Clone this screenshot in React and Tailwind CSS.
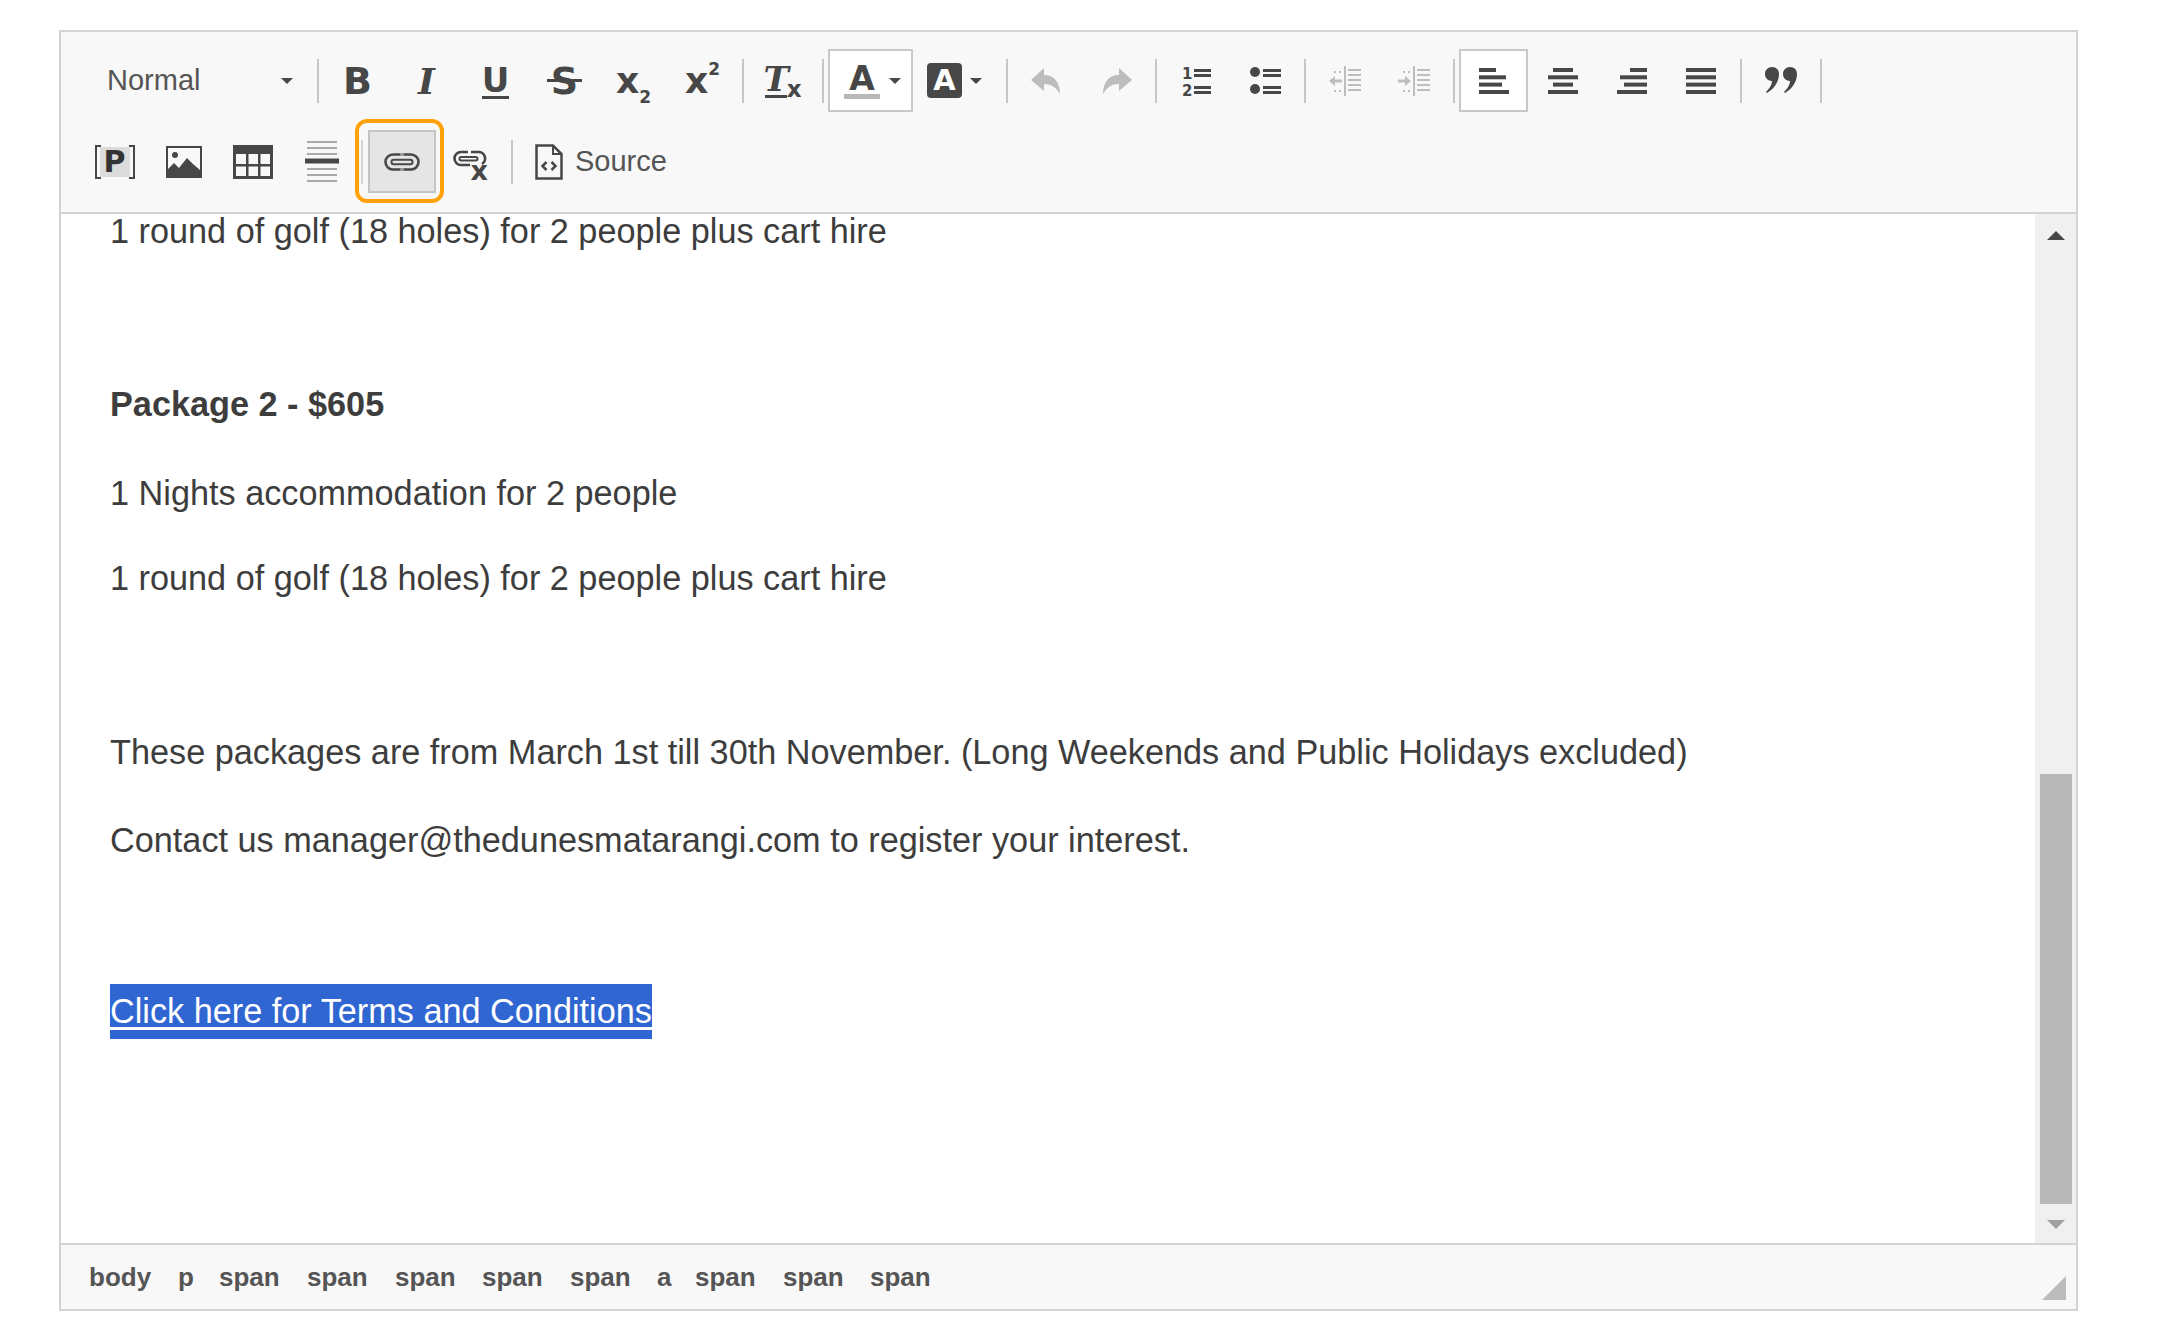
const D = "#474747";
const L = "#bdbdbd";

function Sep() {
  return <div className="w-[2px] h-[44px] ml-[5px] mr-[4px] bg-[#c6c6c6] shrink-0" />;
}
function Btn({ children, className = "" }) {
  return <div className={"w-[69px] h-[63px] flex items-center justify-center shrink-0 " + className}>{children}</div>;
}
function Caret({ className = "" }) {
  return <div className={"w-0 h-0 border-l-[6px] border-r-[6px] border-t-[6px] border-l-transparent border-r-transparent border-t-[#474747] " + className} />;
}
function Ic({ children, w = 36, h = 36, vb = "0 0 36 36" }) {
  return <svg width={w} height={h} viewBox={vb} fill="none">{children}</svg>;
}
const glyph = "font-['DejaVu_Sans',sans-serif] text-[#474747] font-bold leading-none";

function Lines({ x, ys, w, c = D, t = 3 }) {
  return ys.map((y, i) => <rect key={i} x={x} y={y} width={w} height={t} fill={c} />);
}
function Align({ kind }) {
  const ys = [5, 12.3, 19.6, 27];
  const ws = kind === "just" ? [30, 30, 30, 30] : kind === "center" ? [20, 30, 20, 30] : [17, 27, 23, 30];
  return (
    <Ic>
      {ys.map((y, i) => {
        const w = ws[i];
        const x = kind === "left" ? 3 : kind === "right" ? 33 - w : 18 - w / 2;
        return <rect key={i} x={x} y={y} width={w} height={4} fill={D} />;
      })}
    </Ic>
  );
}
function Indent({ out }) {
  return (
    <Ic>
      <rect x="17" y="3" width="2" height="30" fill={L} />
      <Lines x={21} ys={[6, 11, 16, 21, 26]} w={13} c={L} t={2} />
      {[8, 27].map((y) => <rect key={y} x="7" y={y} width="2" height="2" fill={L} />)}
      {[8, 27].map((y) => <rect key={y + 1} x="12" y={y} width="2" height="2" fill={L} />)}
      <path d={out ? "M2 18 L8 13 V16.5 H15 V19.5 H8 V23 Z" : "M15 18 L9 13 V16.5 H2 V19.5 H9 V23 Z"} fill={L} />
    </Ic>
  );
}
function LinkIcon() {
  return (
    <Ic w={36} h={18} vb="0 0 36 18">
      <path d="M16 1.5 H9 a7.5 7.5 0 0 0 0 15 H16" stroke={D} strokeWidth="2.6" />
      <path d="M20 1.5 H27 a7.5 7.5 0 0 1 0 15 H20" stroke={D} strokeWidth="2.6" />
      <rect x="7.5" y="6.8" width="21" height="4.4" rx="2.2" stroke={D} strokeWidth="2" />
      <rect x="16" y="0" width="4" height="3" fill={D} opacity="0.5" />
      <rect x="16" y="15" width="4" height="3" fill={D} opacity="0.5" />
    </Ic>
  );
}
function Comma({ x }) {
  return (
    <path
      transform={`translate(${x} 0)`}
      d="M8 4 C12.5 4 15 7 15 11 C15 18 11 25 3 30 L2 29 C6 25 8 21 8 18 C4 18 1 15 1 11 C1 7 4 4 8 4 Z"
      fill={D}
    />
  );
}

function Row1() {
  return (
    <div className="flex items-center h-[63px] relative">
      <div className="w-[251px] pl-[46px] pr-[19px] h-[63px] flex items-center justify-between shrink-0">
        <span className="text-[29px] text-[#555] leading-none">Normal</span>
        <Caret />
      </div>
      <Sep />
      <Btn><span className={glyph + " text-[38px]"}>B</span></Btn>
      <Btn><span className={"font-['DejaVu_Serif',serif] italic font-bold text-[#474747] text-[36px] leading-none"}>I</span></Btn>
      <Btn>
        <div className="flex flex-col items-center">
          <span className={glyph + " text-[34px] -mb-[1px]"}>U</span>
          <div className="w-[27px] h-[3px] bg-[#474747]" />
        </div>
      </Btn>
      <Btn><span className="relative flex items-center justify-center"><span className={glyph + " text-[38px]"}>S</span><span className="absolute -left-[4px] -right-[4px] top-[17px] h-[3px] bg-[#474747]" /></span></Btn>
      <Btn><span className={glyph + " text-[36px]"}>x<sub className="text-[17px] align-[-6px]">2</sub></span></Btn>
      <Btn><span className={glyph + " text-[36px]"}>x<sup className="text-[17px] align-[9px]">2</sup></span></Btn>
      <Sep />
      <Btn>
        <div className="flex flex-col items-center -mt-[2px]">
          <span className="font-['DejaVu_Serif',serif] italic font-bold text-[#474747] text-[34px] leading-none">T</span>
          <div className="w-[22px] h-[3px] bg-[#474747] -mt-[1px]" />
        </div>
        <span className={glyph + " text-[23px] mt-[18px] -ml-[2px]"}>x</span>
      </Btn>
      <Sep />
      <div className="w-[85px] h-[63px] border-2 border-[#c8c8c8] bg-white flex items-center pl-[14px] gap-[9px] shrink-0">
        <div className="flex flex-col items-center w-[36px]">
          <span className={glyph + " text-[33px] -mb-[1px]"}>A</span>
          <div className="w-[36px] h-[5px] bg-[#b8b8b8]" />
        </div>
        <Caret />
      </div>
      <div className="w-[88px] h-[63px] flex items-center pl-[14px] gap-[8px] shrink-0">
        <div className="w-[35px] h-[35px] rounded-[4px] bg-[#474747] flex items-center justify-center">
          <span className="font-['DejaVu_Sans',sans-serif] font-bold text-white text-[29px] leading-none">A</span>
        </div>
        <Caret />
      </div>
      <Sep />
      <Btn><Ic><path d="M15 5 L2 17 L15 28 V21 C22 21 27 24 31 31 C31 19 25 12 15 12 Z" fill={L} /></Ic></Btn>
      <Btn><Ic><path d="M21 5 L34 17 L21 28 V21 C14 21 9 24 5 31 C5 19 11 12 21 12 Z" fill={L} /></Ic></Btn>
      <Sep />
      <Btn>
        <Ic>
          <text x="4" y="16" fontSize="15" fontWeight="700" fill={D} fontFamily="'DejaVu Sans',sans-serif">1</text>
          <text x="4" y="33" fontSize="15" fontWeight="700" fill={D} fontFamily="'DejaVu Sans',sans-serif">2</text>
          <Lines x={16} ys={[6, 11, 23, 28]} w={17} />
        </Ic>
      </Btn>
      <Btn>
        <Ic>
          <circle cx="8" cy="9" r="5" fill={D} />
          <circle cx="8" cy="26" r="5" fill={D} />
          <Lines x={16} ys={[6, 11, 23, 28]} w={18} />
        </Ic>
      </Btn>
      <Sep />
      <Btn><Indent out /></Btn>
      <Btn><Indent /></Btn>
      <Sep />
      <Btn className="border-2 border-[#c8c8c8] bg-white"><Align kind="left" /></Btn>
      <Btn><Align kind="center" /></Btn>
      <Btn><Align kind="right" /></Btn>
      <Btn><Align kind="just" /></Btn>
      <Sep />
      <Btn>
        <Ic>
          <Comma x={1} />
          <Comma x={19} />
        </Ic>
      </Btn>
      <Sep />
    </div>
  );
}

function Row2() {
  return (
    <div className="flex items-center h-[63px] pl-[19px]">
      <Btn>
        <span className="relative flex items-center w-[40px] h-[34px] justify-center">
          <span className="absolute left-[5px] top-[2px] w-[30px] h-[30px] bg-[#dcdcdc]" />
          <span className="absolute left-0 top-0 w-[6px] h-[34px] border-l-2 border-t-2 border-b-2 border-[#474747]" />
          <span className="absolute right-0 top-0 w-[6px] h-[34px] border-r-2 border-t-2 border-b-2 border-[#474747]" />
          <span className="relative font-['DejaVu_Sans',sans-serif] font-bold text-[#333] text-[30px] leading-none">P</span>
        </span>
      </Btn>
      <Btn>
        <Ic w={36} h={32} vb="0 0 36 32">
          <rect x="1" y="1" width="34" height="30" stroke={D} strokeWidth="2" />
          <circle cx="9" cy="9" r="3" fill={D} />
          <path d="M2 30 V23 L8 17 L13 22 L21 12 L27 18 L34 24 V30 Z" fill={D} />
        </Ic>
      </Btn>
      <Btn>
        <Ic w={40} h={34} vb="0 0 40 34">
          <rect x="1" y="0" width="38" height="9" fill={D} />
          <rect x="1.5" y="1.5" width="37" height="31" stroke={D} strokeWidth="3" />
          <rect x="13" y="8" width="2.5" height="25" fill={D} />
          <rect x="25" y="8" width="2.5" height="25" fill={D} />
          <rect x="1" y="19" width="38" height="2.5" fill={D} />
        </Ic>
      </Btn>
      <Btn>
        <Ic w={36} h={42} vb="0 0 36 42">
          <Lines x={3} ys={[0, 6, 12]} w={30} c="#a8a8a8" t={2} />
          <rect x="1" y="17.5" width="34" height="5" fill={D} />
          <Lines x={3} ys={[27, 33, 39]} w={30} c="#a8a8a8" t={2} />
        </Ic>
      </Btn>
      <div className="w-[2px] h-[44px] ml-[5px] bg-[#d4d4d4] shrink-0" />
      <div className="relative ml-[5px] w-[68px] h-[63px] bg-[#e5e5e5] border-2 border-[#c4c4c4] flex items-center justify-center shrink-0">
        <LinkIcon />
        <div className="absolute -left-[15px] -right-[10px] -top-[13px] -bottom-[12px] border-[4px] border-[#ffa20a] rounded-[12px]" />
      </div>
      <Btn>
        <span className="relative flex">
          <Ic w={36} h={24} vb="0 0 36 24">
            <path d="M15 2 H8 a6.5 6.5 0 0 0 0 13 H17" stroke={D} strokeWidth="2.6" />
            <path d="M18 2 H26 a6.5 6.5 0 0 1 3 12" stroke={D} strokeWidth="2.6" />
            <rect x="6.5" y="7" width="18" height="3.5" rx="1.7" stroke={D} strokeWidth="2" />
          </Ic>
          <span className={glyph + " absolute left-[18px] top-[7px] text-[27px]"}>x</span>
        </span>
      </Btn>
      <div className="w-[2px] h-[44px] ml-[6px] bg-[#c6c6c6] shrink-0" />
      <div className="flex items-center ml-[22px] gap-[12px]">
        <Ic w={28} h={36} vb="0 0 28 36">
          <path d="M1.5 1.5 H18 L26.5 10 V34.5 H1.5 Z" stroke={D} strokeWidth="2.5" fill="none" />
          <path d="M18 1.5 V10 H26.5" stroke={D} strokeWidth="2" />
          <path d="M11.5 18 L7.5 22 L11.5 26 M16.5 18 L20.5 22 L16.5 26" stroke={D} strokeWidth="2.5" />
        </Ic>
        <span className="text-[29px] text-[#555] leading-none">Source</span>
      </div>
    </div>
  );
}

function P({ className = "", children }) {
  return <p className={"h-[40px] leading-[40px] whitespace-nowrap " + className}>{children}</p>;
}

export default function App() {
  return (
    <div className="min-h-[1336px] bg-white pl-[59px] pt-[30px] font-['Liberation_Sans',Arial,sans-serif]">
      <div className="w-[2019px] h-[1281px] border-2 border-[#d3d3d3] flex flex-col">
        <div className="h-[182px] bg-[#f8f8f8] border-b-2 border-[#d3d3d3] pt-[17px] flex flex-col gap-[18px] shrink-0">
          <Row1 />
          <Row2 />
        </div>
        <div className="flex-1 flex min-h-0">
          <div className="flex-1 pl-[49px] text-[34.25px] text-[#3d3d3d]">
            <p className="h-[34px] leading-[34px] whitespace-nowrap">1 round of golf (18 holes) for 2 people plus cart hire</p>
            <P className="mt-[136px] font-bold">Package 2 - $605</P>
            <P className="mt-[49px]">1 Nights accommodation for 2 people</P>
            <P className="mt-[45px]">1 round of golf (18 holes) for 2 people plus cart hire</P>
            <P className="mt-[134px]">These packages are from March 1st till 30th November. (Long Weekends and Public Holidays excluded)</P>
            <P className="mt-[48px]">Contact us manager@thedunesmatarangi.com to register your interest.</P>
            <P className="mt-[131px]">
              <span className="bg-[#2f66d2] text-white underline underline-offset-[4px] pt-[8px] pb-[9px]">Click here for Terms and Conditions</span>
            </P>
          </div>
          <div className="w-[41px] bg-[#f0f0f0] flex flex-col items-center shrink-0 pb-[14px]">
            <div className="mt-[17px] w-0 h-0 border-l-[9px] border-r-[9px] border-b-[9px] border-l-transparent border-r-transparent border-b-[#474747]" />
            <div className="flex-1" />
            <div className="w-[32px] h-[430px] bg-[#b8b8b8]" />
            <div className="mt-[16px] w-0 h-0 border-l-[9px] border-r-[9px] border-t-[9px] border-l-transparent border-r-transparent border-t-[#a0a0a0]" />
          </div>
        </div>
        <div className="h-[66px] bg-[#f8f8f8] border-t-2 border-[#d3d3d3] flex items-center pl-[28px] pr-[10px] shrink-0 text-[26px] font-bold text-[#555] leading-none">
          <span className="w-[89px]">body</span>
          <span className="w-[41px]">p</span>
          <span className="w-[88px]">span</span>
          <span className="w-[88px]">span</span>
          <span className="w-[87px]">span</span>
          <span className="w-[88px]">span</span>
          <span className="w-[87px]">span</span>
          <span className="w-[38px]">a</span>
          <span className="w-[88px]">span</span>
          <span className="w-[87px]">span</span>
          <span className="w-[88px]">span</span>
          <div className="ml-auto self-end mb-[9px] w-0 h-0 border-b-[24px] border-l-[24px] border-l-transparent border-b-[#bcbcbc]" />
        </div>
      </div>
    </div>
  );
}
